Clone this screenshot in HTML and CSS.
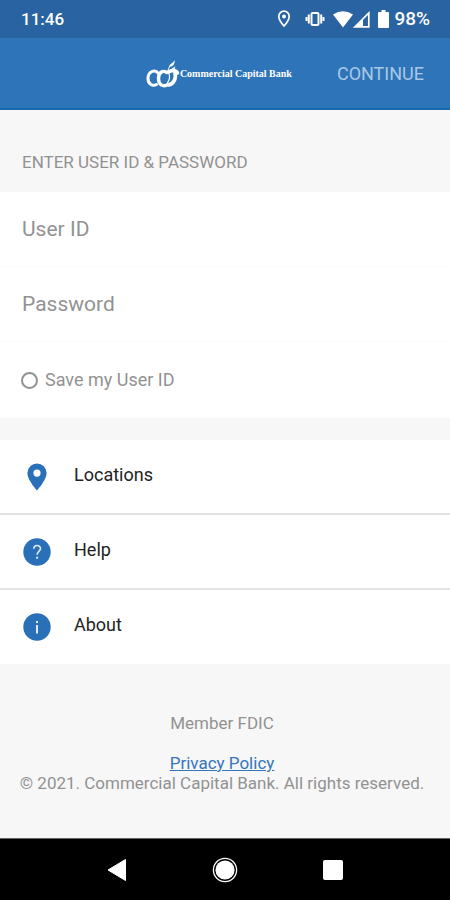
FILE: index.html
```html
<!DOCTYPE html>
<html lang="en">
<head>
<meta charset="utf-8">
<meta name="viewport" content="width=device-width, initial-scale=1">
<title>Commercial Capital Bank</title>
<link rel="stylesheet" href="styles.css">
</head>
<body>
<div class="status">
  <span class="time">11:46</span>
  <div class="indicators">
    <svg class="gps" width="14" height="18" viewBox="0 0 14 18"><path d="M7 1.200a5.200 5.200 0 0 0-5.200 5.200C1.800 10.200 7 16 7 16s5.200-5.800 5.200-9.600A5.200 5.200 0 0 0 7 1.200z" fill="none" stroke="#fff" stroke-width="1.700"/><circle cx="7" cy="6.500" r="2" fill="#fff"/></svg>
    <svg class="vibrate" width="20" height="16" viewBox="0 0 20 16"><rect x="6.500" y="2" width="7" height="12" rx="1" fill="none" stroke="#fff" stroke-width="2"/><path d="M3.800 3.500v9M16.200 3.500v9M1.500 6v4M18.500 6v4" stroke="#fff" stroke-width="2"/></svg>
    <svg class="wifi" width="20" height="17" viewBox="0 0 20 17"><path d="M0 3.500Q10-3 20 3.500L10 16.500z" fill="#fff"/></svg>
    <svg class="signal" width="17" height="17" viewBox="0 0 17 17"><path d="M2 15.800L15.800 2v13.800z" fill="none" stroke="#fff" stroke-width="1.700"/><path d="M2 16L10 8v8z" fill="#fff"/></svg>
    <svg class="battery" width="11" height="18" viewBox="0 0 11 18"><path d="M3.500 0h4v2H10a1 1 0 0 1 1 1v14a1 1 0 0 1-1 1H1a1 1 0 0 1-1-1V3a1 1 0 0 1 1-1h2.500z" fill="#fff"/></svg>
    <span class="percent">98%</span>
  </div>
</div>
<header class="bar">
  <div class="brand">
    <svg width="35" height="30" viewBox="0 0 35 30" aria-hidden="true">
      <g fill="none" stroke="#fff" stroke-linecap="round" stroke-linejoin="round">
        <path d="M13.500 14.500C10 9.500 3 12.500 3 19.500c0 6 5 8 8.500 6" stroke-width="3"/>
        <path d="M22 13.500c-5-3-8.500.5-8.500 6 0 6.500 4.500 8.500 8.500 6.500" stroke-width="3.400"/>
        <path d="M23.500 13c3-2 7.500-2 9 1M30 14.500c1.500 5-1.500 10.500-6.500 11.500" stroke-width="3.600"/>
        <path d="M23.500 14c2.500 3.500.5 7-1.500 11" stroke-width="1.200"/>
        <path d="M23 11.500c.5-3 2-5 4.500-6.500" stroke-width="1"/>
      </g>
      <path d="M24 8c0-3 4-3.500 5.500-7 .6 4-1 6.500-5.500 7zM25 11.500c1.500-3 4-2 5.200-4.500.3 3.500-1.700 5-5.200 4.500z" fill="#fff"/>
    </svg>
    <span>Commercial Capital Bank</span>
  </div>
  <button class="continue" type="submit" form="login">CONTINUE</button>
</header>
<main>
  <form id="login">
    <h1 class="heading">ENTER USER ID &amp; PASSWORD</h1>
    <div class="fields">
      <input class="field" type="text" placeholder="User ID" aria-label="User ID">
      <input class="field" type="password" placeholder="Password" aria-label="Password">
      <label class="save" for="save"><input id="save" type="checkbox">Save my User ID</label>
    </div>
  </form>
  <nav class="links">
    <a href="#locations">
      <svg width="28" height="28" viewBox="0 0 28 28"><path fill-rule="evenodd" d="M14 .5A9.600 9.600 0 0 0 4.400 10C4.400 17 14 27.500 14 27.500S23.600 17 23.600 10A9.600 9.600 0 0 0 14 .5zm0 6a3.600 3.600 0 1 1 0 7.200 3.600 3.600 0 0 1 0-7.200z" fill="#2a70b9"/></svg>
      <span>Locations</span></a>
    <a href="#help">
      <svg width="28" height="28" viewBox="0 0 28 28"><circle cx="14" cy="14" r="13.700" fill="#2a70b9"/><path d="M10.800 10.800c0-4.400 6.700-4.200 6.700-.3 0 2.900-3.400 2.900-3.400 6.300" fill="none" stroke="#dceaf7" stroke-width="1.600"/><rect x="13.100" y="18.700" width="2" height="2" fill="#dceaf7"/></svg>
      <span>Help</span></a>
    <a href="#about">
      <svg width="28" height="28" viewBox="0 0 28 28"><circle cx="14" cy="14" r="13.700" fill="#2a70b9"/><path d="M14 12v8.500M14 8v2" stroke="#dceaf7" stroke-width="2"/></svg>
      <span>About</span></a>
  </nav>
</main>
<footer class="legal">
  <p class="member">Member FDIC</p>
  <a href="#privacy">Privacy Policy</a>
  <p>© 2021. Commercial Capital Bank. All rights reserved.</p>
</footer>
<nav class="system">
  <button type="button" aria-label="Back"><svg width="24" height="26" viewBox="0 0 24 26"><path d="M3 13L20.500 2.500v21z" fill="#fff" stroke="#fff" stroke-linejoin="round"/></svg></button>
  <button type="button" aria-label="Home"><svg width="26" height="26" viewBox="0 0 26 26"><circle cx="13" cy="13" r="11.600" fill="none" stroke="#fff" stroke-width="1.300"/><circle cx="13" cy="13" r="9.600" fill="#fff"/></svg></button>
  <button type="button" aria-label="Recent apps"><svg width="24" height="26" viewBox="0 0 24 26"><rect x="2" y="3" width="20" height="20" rx="2" fill="#fff"/></svg></button>
</nav>
</body>
</html>
```
FILE: styles.css
```css
* { box-sizing: border-box; }

body {
  margin: 0;
  min-height: 100vh;
  display: flex;
  flex-direction: column;
  background: #f7f7f7;
  color: #929292;
  font-family: Roboto, "Liberation Sans", sans-serif;
  font-size: 17px;
  line-height: 20px;
}

svg { display: block; flex: none; }
p, h1 { margin: 0; }
button { border: 0; padding: 0; background: none; font: inherit; }

.status {
  height: 38px;
  padding: 0 20px 0 21px;
  display: flex;
  align-items: center;
  justify-content: space-between;
  background: #2963a1;
  color: #fff;
  font-weight: 500;
}

.indicators { display: flex; align-items: center; }
.gps { margin-right: 14px; }
.vibrate { margin-right: 8px; }
.signal { margin-right: 8px; }
.battery { margin-right: 5px; }
.percent { font-size: 19px; }

.bar {
  height: 72px;
  padding: 2px 26px 0;
  display: flex;
  align-items: center;
  justify-content: flex-end;
  gap: 45px;
  background: #2e74b9;
  border-bottom: 2px solid #1768ad;
}

.brand {
  display: flex;
  align-items: center;
  color: #fff;
  font: bold 10px/20px "Liberation Serif", serif;
}

.continue { color: #a9c8e6; font-size: 18px; }

.heading {
  padding: 42px 22px 20px;
  font-size: 17px;
  font-weight: 400;
  line-height: 20px;
}

.fields { background: #fff; }

.field {
  display: block;
  width: 100%;
  height: 75px;
  padding: 0 22px;
  border: 0;
  border-bottom: 1px solid #fbfbfb;
  background: none;
  color: #333;
  font: inherit;
  font-size: 21px;
}

.field::placeholder { color: #929292; opacity: 1; }

.save {
  height: 76px;
  padding: 0 21px;
  display: flex;
  align-items: center;
  gap: 7px;
  font-size: 18px;
}

.save input {
  appearance: none;
  width: 17px;
  height: 17px;
  margin: 0;
  border: 2px solid #929292;
  border-radius: 50%;
}

.save input:checked { background: #2a70b9; }

.links { margin-top: 22px; }

.links a {
  height: 75px;
  padding: 0 23px;
  display: flex;
  align-items: center;
  gap: 23px;
  background: #fff;
  border-bottom: 2px solid #e3e3e3;
  color: #222;
  font-size: 18px;
  text-decoration: none;
}

.links span { padding-bottom: 4px; }
.links a:last-child { height: 74px; border-bottom: 0; }

.legal {
  flex: 1;
  padding: 49px 23px 20px 17px;
  text-align: center;
}

.legal .member { margin-bottom: 20px; }
.legal a { color: #3475bc; }

.system {
  height: 62px;
  padding: 0 105px;
  display: flex;
  align-items: center;
  justify-content: space-between;
  background: #000;
  border-top: 1px solid #666;
}
```
